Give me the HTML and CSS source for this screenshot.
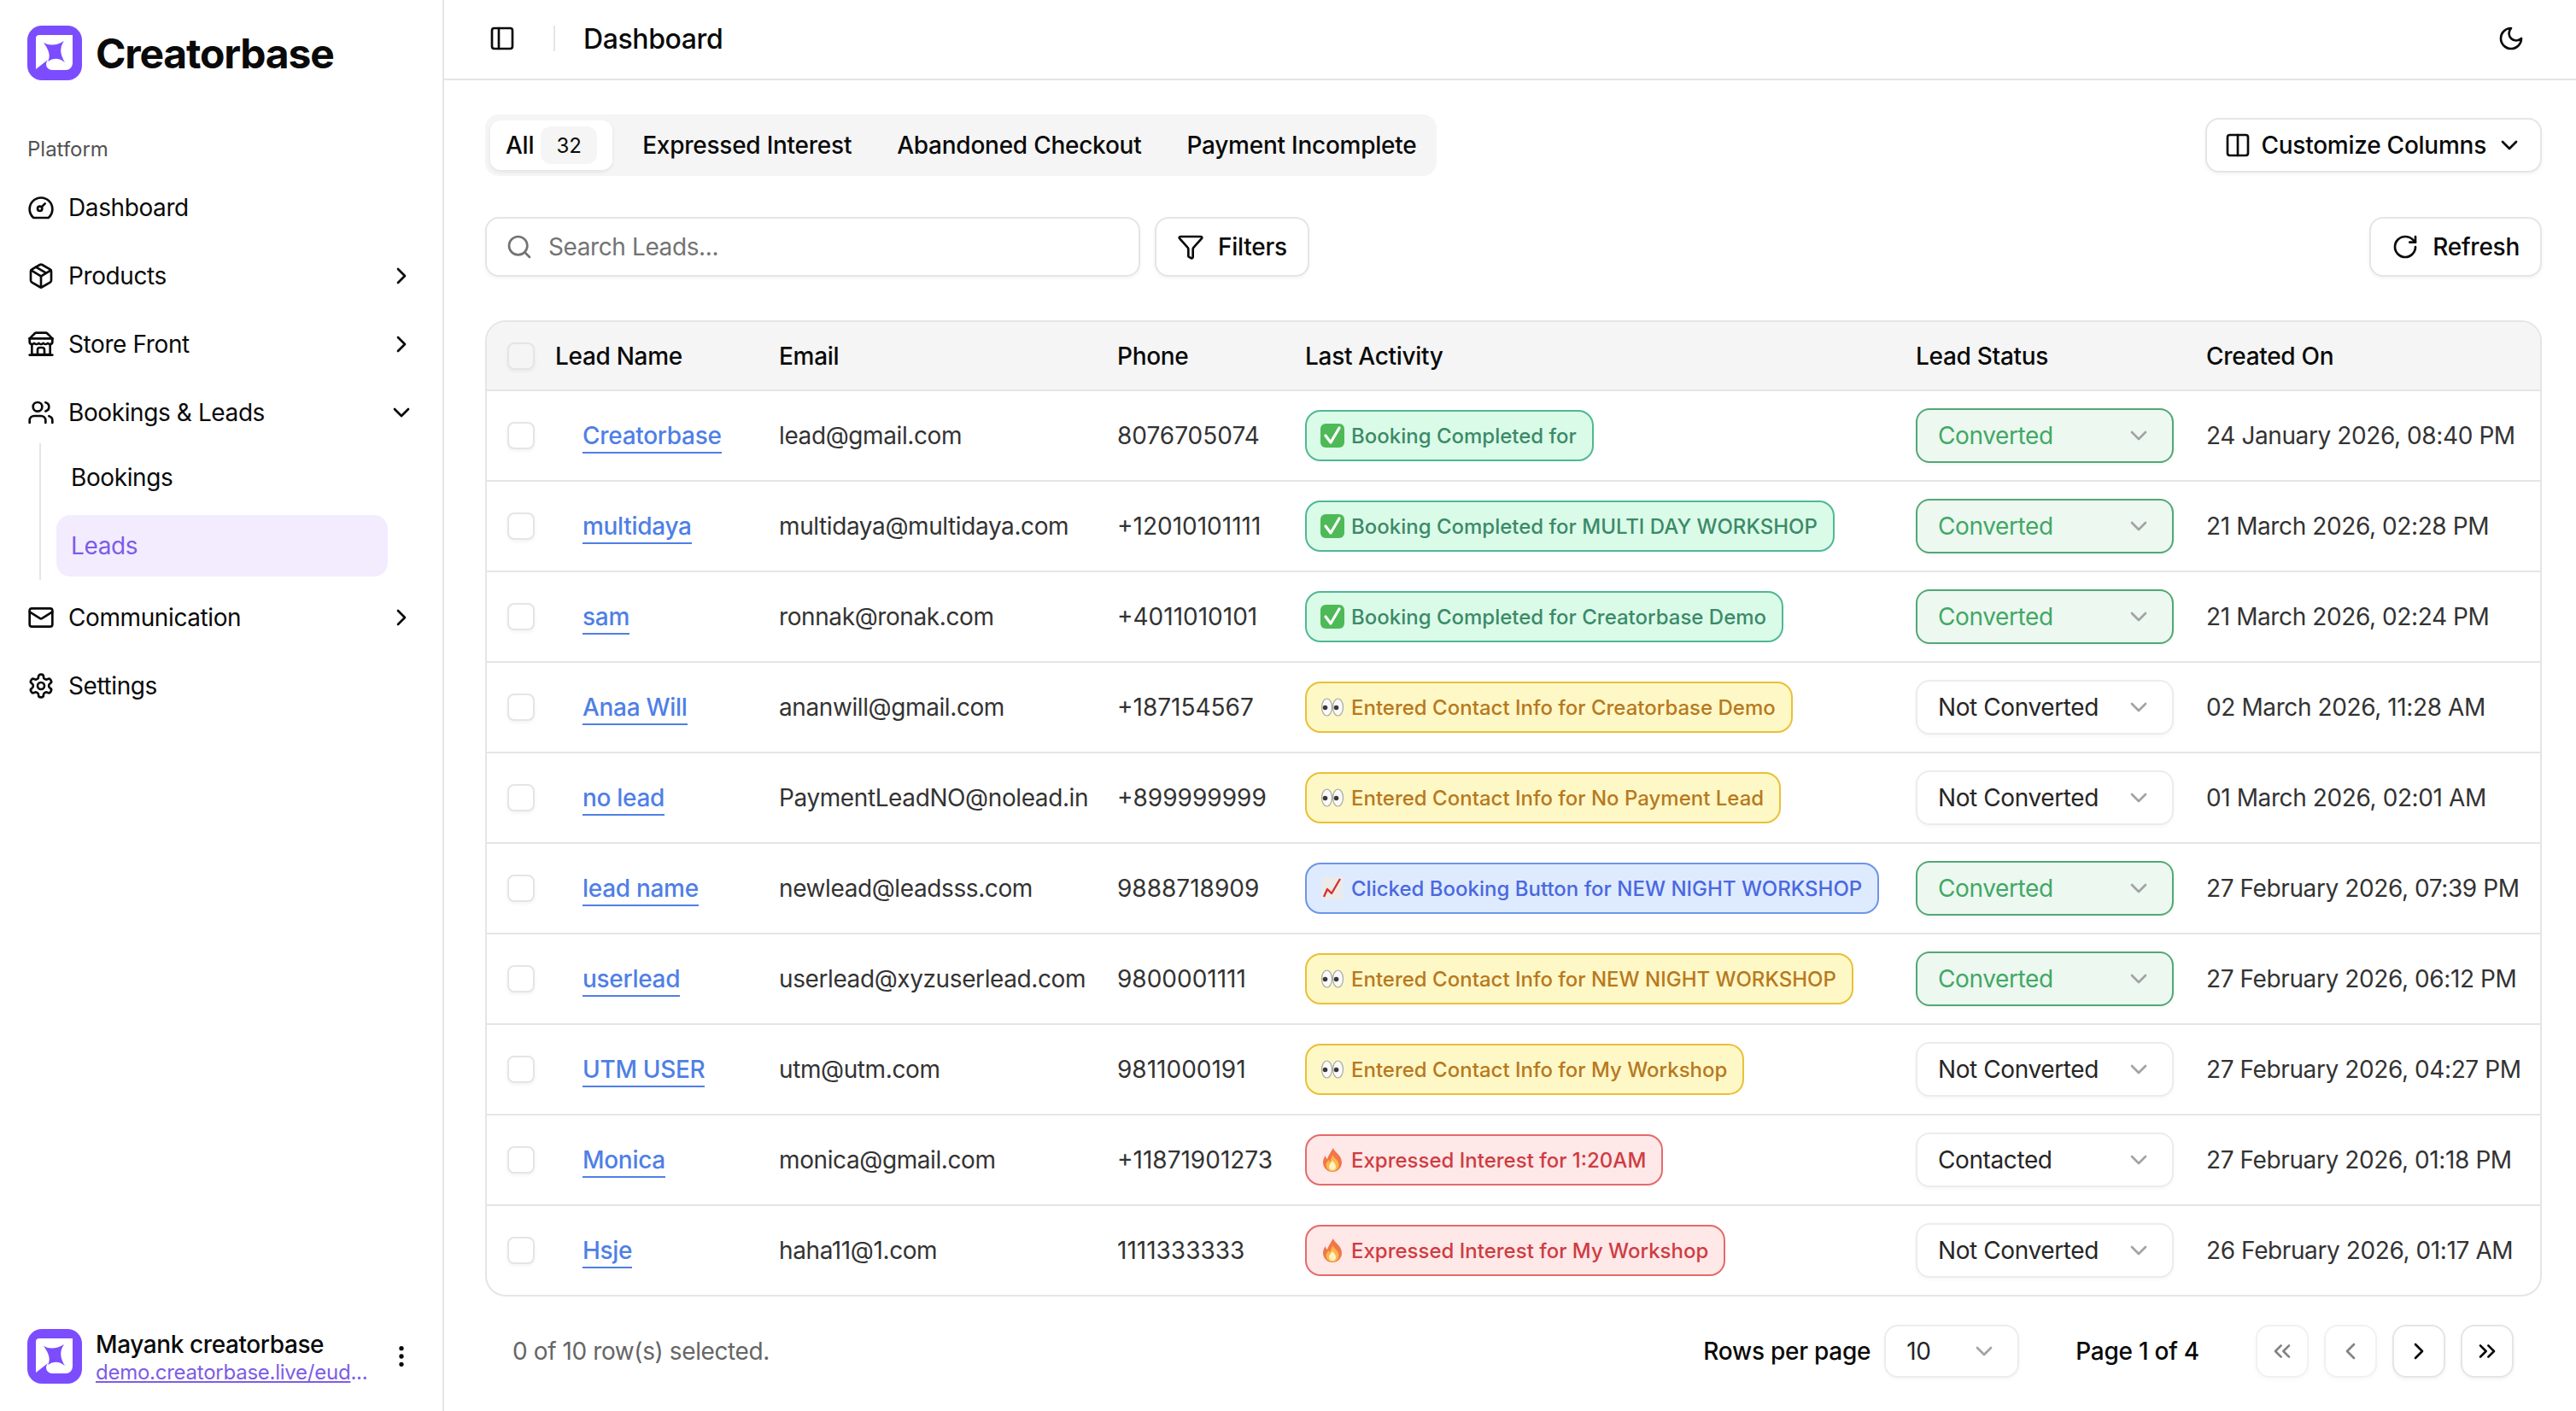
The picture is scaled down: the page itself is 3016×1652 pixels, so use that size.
FILE: index.html
```html
<!DOCTYPE html>
<html lang="en">
<head>
<meta charset="UTF-8">
<title>Leads - Creatorbase</title>
<link rel="stylesheet" href="styles.css">
</head>
<body>

<svg class="sprite" xmlns="http://www.w3.org/2000/svg">
    <symbol id="i-gauge" viewBox="0 0 24 24"><path d="M5.5 21a10 10 0 1 1 13 0z"/><circle cx="11" cy="13" r="2"/><path d="m12.5 11.5 3-3"/></symbol>
    <symbol id="i-package" viewBox="0 0 24 24"><path d="M11 21.73a2 2 0 0 0 2 0l7-4A2 2 0 0 0 21 16V8a2 2 0 0 0-1-1.73l-7-4a2 2 0 0 0-2 0l-7 4A2 2 0 0 0 3 8v8a2 2 0 0 0 1 1.73z"/><path d="M12 22V12"/><path d="m3.3 7 7.703 4.734a2 2 0 0 0 1.994 0L20.7 7"/><path d="m7.5 4.27 9 5.15"/></symbol>
    <symbol id="i-store" viewBox="0 0 24 24"><path d="m2 7 4.41-4.41A2 2 0 0 1 7.83 2h8.34a2 2 0 0 1 1.42.59L22 7"/><path d="M4 12v9h16v-9"/><path d="M15 21v-4a2 2 0 0 0-2-2h-2a2 2 0 0 0-2 2v4"/><path d="M2 7h20"/><path d="M2 21.500h20"/><path d="M22 7v3a2 2 0 0 1-2 2 2.700 2.700 0 0 1-1.590-.63.700.700 0 0 0-.82 0A2.700 2.700 0 0 1 16 12a2.700 2.700 0 0 1-1.590-.63.700.700 0 0 0-.82 0A2.700 2.700 0 0 1 12 12a2.700 2.700 0 0 1-1.590-.63.700.700 0 0 0-.82 0A2.700 2.700 0 0 1 8 12a2.700 2.700 0 0 1-1.590-.63.700.700 0 0 0-.82 0A2.700 2.700 0 0 1 4 12a2 2 0 0 1-2-2V7"/></symbol>
    <symbol id="i-users" viewBox="0 0 24 24"><path d="M16 21v-2a4 4 0 0 0-4-4H6a4 4 0 0 0-4 4v2"/><circle cx="9" cy="7" r="4"/><path d="M22 21v-2a4 4 0 0 0-3-3.870"/><path d="M16 3.130a4 4 0 0 1 0 7.750"/></symbol>
    <symbol id="i-mail" viewBox="0 0 24 24"><rect x="2" y="4" width="20" height="16" rx="2"/><path d="m22 7-8.970 5.700a1.940 1.940 0 0 1-2.060 0L2 7"/></symbol>
    <symbol id="i-settings" viewBox="0 0 24 24"><path d="M12.220 2h-.44a2 2 0 0 0-2 2v.18a2 2 0 0 1-1 1.730l-.43.25a2 2 0 0 1-2 0l-.15-.08a2 2 0 0 0-2.730.73l-.22.38a2 2 0 0 0 .73 2.730l.15.1a2 2 0 0 1 1 1.720v.51a2 2 0 0 1-1 1.740l-.15.09a2 2 0 0 0-.73 2.730l.22.38a2 2 0 0 0 2.730.73l.15-.08a2 2 0 0 1 2 0l.43.25a2 2 0 0 1 1 1.730V20a2 2 0 0 0 2 2h.44a2 2 0 0 0 2-2v-.18a2 2 0 0 1 1-1.730l.43-.25a2 2 0 0 1 2 0l.15.08a2 2 0 0 0 2.730-.73l.22-.39a2 2 0 0 0-.73-2.730l-.15-.08a2 2 0 0 1-1-1.740v-.5a2 2 0 0 1 1-1.740l.15-.09a2 2 0 0 0 .73-2.730l-.22-.38a2 2 0 0 0-2.730-.73l-.15.08a2 2 0 0 1-2 0l-.43-.25a2 2 0 0 1-1-1.730V4a2 2 0 0 0-2-2z"/><circle cx="12" cy="12" r="3"/></symbol>
    <symbol id="i-right" viewBox="0 0 24 24"><path d="m9 18 6-6-6-6"/></symbol>
    <symbol id="i-left" viewBox="0 0 24 24"><path d="m15 18-6-6 6-6"/></symbol>
    <symbol id="i-down" viewBox="0 0 24 24"><path d="m6 9 6 6 6-6"/></symbol>
    <symbol id="i-first" viewBox="0 0 24 24"><path d="m11 17-5-5 5-5"/><path d="m18 17-5-5 5-5"/></symbol>
    <symbol id="i-last" viewBox="0 0 24 24"><path d="m6 17 5-5-5-5"/><path d="m13 17 5-5-5-5"/></symbol>
    <symbol id="i-panel" viewBox="0 0 24 24"><rect x="3" y="3" width="18" height="18" rx="2"/><path d="M9 3v18"/></symbol>
    <symbol id="i-moon" viewBox="0 0 24 24"><path d="M12 3a6 6 0 0 0 9 9 9 9 0 1 1-9-9Z"/></symbol>
    <symbol id="i-columns" viewBox="0 0 24 24"><rect x="3" y="3" width="18" height="18" rx="2"/><path d="M12 3v18"/></symbol>
    <symbol id="i-search" viewBox="0 0 24 24"><circle cx="11" cy="11" r="8"/><path d="m21 21-4.300-4.300"/></symbol>
    <symbol id="i-funnel" viewBox="0 0 24 24"><path d="M10 20a1 1 0 0 0 .553.895l2 1A1 1 0 0 0 14 21v-7a2 2 0 0 1 .517-1.341L21.740 4.670A1 1 0 0 0 21 3H3a1 1 0 0 0-.742 1.670l7.225 7.989A2 2 0 0 1 10 14z"/></symbol>
    <symbol id="i-refresh" viewBox="0 0 24 24"><path d="M21 12a9 9 0 1 1-9-9c2.520 0 4.930 1 6.740 2.740L21 8"/><path d="M21 3v5h-5"/></symbol>
    <symbol id="i-dots" viewBox="0 0 24 24"><circle cx="12" cy="5" r="1"/><circle cx="12" cy="12" r="1"/><circle cx="12" cy="19" r="1"/></symbol>

    <!-- logo -->
    <symbol id="logo" viewBox="0 0 64 64">
        <rect width="64" height="64" rx="17" fill="#7c4dff"/>
        <path fill="#fff" d="M10 15a4 4 0 0 1 4-4h39v33a8 8 0 0 1-8 8H29a7 7 0 0 1-7-7q0-3 2-5L10 51z"/>
        <path fill="#7c4dff" d="M19 20Q30 26 43 18 35 29 44 43 34 35 24 42 29 33 19 20z"/>
    </symbol>

    <!-- emoji, drawn since there is no emoji font -->
    <symbol id="e-check" viewBox="0 0 28 28">
        <rect width="28" height="28" rx="6" fill="#4dba57"/>
        <path d="m6 14 6 8L22 5" fill="none" stroke="#fff" stroke-width="3.200" stroke-linecap="round" stroke-linejoin="round"/>
    </symbol>
    <symbol id="e-eyes" viewBox="0 0 28 28">
        <ellipse cx="7.500" cy="14" rx="6" ry="10" fill="#fafafa" stroke="#a8a8a0" stroke-width="1.200"/>
        <ellipse cx="20.500" cy="14" rx="6" ry="10" fill="#fafafa" stroke="#a8a8a0" stroke-width="1.200"/>
        <circle cx="5.500" cy="14.500" r="2.800" fill="#3a3a3a"/>
        <circle cx="18.500" cy="14.500" r="2.800" fill="#3a3a3a"/>
    </symbol>
    <symbol id="e-chart" viewBox="0 0 28 28">
        <rect x="2" y="1" width="24" height="26" fill="#ecebea"/>
        <path d="M4 24 8 15l5 5L23 3" fill="none" stroke="#d8322b" stroke-width="2.400" stroke-linejoin="round"/>
    </symbol>
    <symbol id="e-fire" viewBox="0 0 28 28">
        <path fill="#f0774a" d="M15 0c1 5 10 8 10 17a11 11 0 0 1-22 0c0-3 1-6 3-8 0 2 1 3 2 4 1-4 4-8 7-13z"/>
        <path fill="#fbb74a" d="M14.500 8c1 4 7 6 7 12a7.500 7.500 0 0 1-15 0c0-3 2-4 3-6 1 1 1 2 2 2 0-3 2-5 3-8z"/>
        <path fill="#fff3c4" d="M14 15c2 2 4 4 4 7a4 4 0 0 1-8 0c0-3 2-4 4-7z"/>
    </symbol>
</svg>

<div class="app">

    <aside class="sidebar">
        <div class="brand">
            <svg class="logo"><use href="#logo"/></svg>
            <span class="brand-name">Creatorbase</span>
        </div>
        <div class="nav-label">Platform</div>
        <nav>
            <div class="nav-item"><svg class="ic"><use href="#i-gauge"/></svg><span>Dashboard</span></div>
            <div class="nav-item"><svg class="ic"><use href="#i-package"/></svg><span>Products</span><svg class="ic nav-arrow"><use href="#i-right"/></svg></div>
            <div class="nav-item"><svg class="ic"><use href="#i-store"/></svg><span>Store Front</span><svg class="ic nav-arrow"><use href="#i-right"/></svg></div>
            <div class="nav-item"><svg class="ic"><use href="#i-users"/></svg><span>Bookings &amp; Leads</span><svg class="ic nav-arrow"><use href="#i-down"/></svg></div>
            <div class="sub-nav">
                <div class="sub-item">Bookings</div>
                <div class="sub-item active">Leads</div>
            </div>
            <div class="nav-item"><svg class="ic"><use href="#i-mail"/></svg><span>Communication</span><svg class="ic nav-arrow"><use href="#i-right"/></svg></div>
            <div class="nav-item"><svg class="ic"><use href="#i-settings"/></svg><span>Settings</span></div>
        </nav>
        <div class="user">
            <svg class="logo"><use href="#logo"/></svg>
            <div class="user-info">
                <div class="user-name">Mayank creatorbase</div>
                <div class="user-link"><u>demo.creatorbase.live/eud</u>...</div>
            </div>
            <svg class="ic user-menu"><use href="#i-dots"/></svg>
        </div>
    </aside>

    <main class="main">
        <header class="topbar">
            <svg class="ic"><use href="#i-panel"/></svg>
            <span class="topbar-sep"></span>
            <span class="topbar-title">Dashboard</span>
            <svg class="ic topbar-moon"><use href="#i-moon"/></svg>
        </header>

        <div class="content">
            <div class="toolbar">
                <div class="tabs">
                    <div class="tab active">All <span class="tab-count">32</span></div>
                    <div class="tab">Expressed Interest</div>
                    <div class="tab">Abandoned Checkout</div>
                    <div class="tab">Payment Incomplete</div>
                </div>
                <div class="btn btn-columns"><svg class="ic"><use href="#i-columns"/></svg>Customize Columns<svg class="ic"><use href="#i-down"/></svg></div>
            </div>

            <div class="toolbar filters">
                <div class="search"><svg class="ic"><use href="#i-search"/></svg><span>Search Leads...</span></div>
                <div class="btn btn-tall"><svg class="ic"><use href="#i-funnel"/></svg>Filters</div>
                <div class="btn btn-tall btn-refresh"><svg class="ic"><use href="#i-refresh"/></svg>Refresh</div>
            </div>

            <div class="table-wrap">
                <table class="leads">
                    <colgroup>
                        <col class="c-check"><col class="c-name"><col class="c-email"><col class="c-phone"><col class="c-activity"><col class="c-status"><col>
                    </colgroup>
                    <thead>
                        <tr>
                            <th class="check-cell"><span class="check check-head"></span></th>
                            <th>Lead Name</th>
                            <th>Email</th>
                            <th>Phone</th>
                            <th>Last Activity</th>
                            <th>Lead Status</th>
                            <th>Created On</th>
                        </tr>
                    </thead>
                    <tbody>
                        <tr>
                            <td class="check-cell"><span class="check"></span></td>
                            <td class="name-cell"><a>Creatorbase</a></td>
                            <td>lead@gmail.com</td>
                            <td>8076705074</td>
                            <td><span class="badge green"><svg class="emoji"><use href="#e-check"/></svg>Booking Completed for</span></td>
                            <td><div class="status converted">Converted<svg class="ic"><use href="#i-down"/></svg></div></td>
                            <td>24 January 2026, 08:40 PM</td>
                        </tr>
                        <tr>
                            <td class="check-cell"><span class="check"></span></td>
                            <td class="name-cell"><a>multidaya</a></td>
                            <td>multidaya@multidaya.com</td>
                            <td>+12010101111</td>
                            <td><span class="badge green"><svg class="emoji"><use href="#e-check"/></svg>Booking Completed for MULTI DAY WORKSHOP</span></td>
                            <td><div class="status converted">Converted<svg class="ic"><use href="#i-down"/></svg></div></td>
                            <td>21 March 2026, 02:28 PM</td>
                        </tr>
                        <tr>
                            <td class="check-cell"><span class="check"></span></td>
                            <td class="name-cell"><a>sam</a></td>
                            <td>ronnak@ronak.com</td>
                            <td>+4011010101</td>
                            <td><span class="badge green"><svg class="emoji"><use href="#e-check"/></svg>Booking Completed for Creatorbase Demo</span></td>
                            <td><div class="status converted">Converted<svg class="ic"><use href="#i-down"/></svg></div></td>
                            <td>21 March 2026, 02:24 PM</td>
                        </tr>
                        <tr>
                            <td class="check-cell"><span class="check"></span></td>
                            <td class="name-cell"><a>Anaa Will</a></td>
                            <td>ananwill@gmail.com</td>
                            <td>+187154567</td>
                            <td><span class="badge yellow"><svg class="emoji"><use href="#e-eyes"/></svg>Entered Contact Info for Creatorbase Demo</span></td>
                            <td><div class="status">Not Converted<svg class="ic"><use href="#i-down"/></svg></div></td>
                            <td>02 March 2026, 11:28 AM</td>
                        </tr>
                        <tr>
                            <td class="check-cell"><span class="check"></span></td>
                            <td class="name-cell"><a>no lead</a></td>
                            <td>PaymentLeadNO@nolead.in</td>
                            <td>+899999999</td>
                            <td><span class="badge yellow"><svg class="emoji"><use href="#e-eyes"/></svg>Entered Contact Info for No Payment Lead</span></td>
                            <td><div class="status">Not Converted<svg class="ic"><use href="#i-down"/></svg></div></td>
                            <td>01 March 2026, 02:01 AM</td>
                        </tr>
                        <tr>
                            <td class="check-cell"><span class="check"></span></td>
                            <td class="name-cell"><a>lead name</a></td>
                            <td>newlead@leadsss.com</td>
                            <td>9888718909</td>
                            <td><span class="badge blue"><svg class="emoji"><use href="#e-chart"/></svg>Clicked Booking Button for NEW NIGHT WORKSHOP</span></td>
                            <td><div class="status converted">Converted<svg class="ic"><use href="#i-down"/></svg></div></td>
                            <td>27 February 2026, 07:39 PM</td>
                        </tr>
                        <tr>
                            <td class="check-cell"><span class="check"></span></td>
                            <td class="name-cell"><a>userlead</a></td>
                            <td>userlead@xyzuserlead.com</td>
                            <td>9800001111</td>
                            <td><span class="badge yellow"><svg class="emoji"><use href="#e-eyes"/></svg>Entered Contact Info for NEW NIGHT WORKSHOP</span></td>
                            <td><div class="status converted">Converted<svg class="ic"><use href="#i-down"/></svg></div></td>
                            <td>27 February 2026, 06:12 PM</td>
                        </tr>
                        <tr>
                            <td class="check-cell"><span class="check"></span></td>
                            <td class="name-cell"><a>UTM USER</a></td>
                            <td>utm@utm.com</td>
                            <td>9811000191</td>
                            <td><span class="badge yellow"><svg class="emoji"><use href="#e-eyes"/></svg>Entered Contact Info for My Workshop</span></td>
                            <td><div class="status">Not Converted<svg class="ic"><use href="#i-down"/></svg></div></td>
                            <td>27 February 2026, 04:27 PM</td>
                        </tr>
                        <tr>
                            <td class="check-cell"><span class="check"></span></td>
                            <td class="name-cell"><a>Monica</a></td>
                            <td>monica@gmail.com</td>
                            <td>+11871901273</td>
                            <td><span class="badge red"><svg class="emoji"><use href="#e-fire"/></svg>Expressed Interest for 1:20AM</span></td>
                            <td><div class="status">Contacted<svg class="ic"><use href="#i-down"/></svg></div></td>
                            <td>27 February 2026, 01:18 PM</td>
                        </tr>
                        <tr>
                            <td class="check-cell"><span class="check"></span></td>
                            <td class="name-cell"><a>Hsje</a></td>
                            <td>haha11@1.com</td>
                            <td>1111333333</td>
                            <td><span class="badge red"><svg class="emoji"><use href="#e-fire"/></svg>Expressed Interest for My Workshop</span></td>
                            <td><div class="status">Not Converted<svg class="ic"><use href="#i-down"/></svg></div></td>
                            <td>26 February 2026, 01:17 AM</td>
                        </tr>
                    </tbody>
                </table>
            </div>

            <div class="pager">
                <span class="pager-selected">0 of 10 row(s) selected.</span>
                <span class="pager-label">Rows per page</span>
                <div class="status pager-size">10<svg class="ic"><use href="#i-down"/></svg></div>
                <span class="pager-label pager-page">Page 1 of 4</span>
                <div class="pager-btns">
                    <div class="page-btn disabled"><svg class="ic"><use href="#i-first"/></svg></div>
                    <div class="page-btn disabled"><svg class="ic"><use href="#i-left"/></svg></div>
                    <div class="page-btn"><svg class="ic"><use href="#i-right"/></svg></div>
                    <div class="page-btn"><svg class="ic"><use href="#i-last"/></svg></div>
                </div>
            </div>
        </div>
    </main>

</div>

</body>
</html>
```

FILE: styles.css
```css
/* page is a 2x-sized dashboard, so sizes look large */
* {
    box-sizing: border-box;
}

body {
    margin: 0;
    font-family: Inter, "Liberation Sans", sans-serif;
    font-size: 28px;
    letter-spacing: -0.4px;
    color: #0a0a0a;
    background: #fff;
}

.sprite {
    display: none;
}

.ic {
    width: 32px;
    height: 32px;
    flex-shrink: 0;
    fill: none;
    stroke: currentColor;
    stroke-width: 2;
    stroke-linecap: round;
    stroke-linejoin: round;
}

.app {
    display: flex;
    height: 1652px;
    overflow: hidden;
}

/* sidebar */
.sidebar {
    width: 520px;
    flex-shrink: 0;
    display: flex;
    flex-direction: column;
    padding: 30px 32px 30px;
    border-right: 2px solid #e5e5e5;
}

.brand {
    display: flex;
    align-items: center;
    gap: 16px;
    height: 64px;
}

.logo {
    width: 64px;
    height: 64px;
    flex-shrink: 0;
}

.brand-name {
    font-size: 48px;
    font-weight: 700;
    letter-spacing: -1.2px;
}

.nav-label {
    margin-top: 65px;
    font-size: 24px;
    line-height: 32px;
    letter-spacing: 0;
    color: #525252;
}

nav {
    margin-top: 12px;
    width: 454px;
}

.nav-item {
    display: flex;
    align-items: center;
    gap: 16px;
    height: 80px;
}

.nav-arrow {
    margin-left: auto;
}

.sub-nav {
    display: flex;
    flex-direction: column;
    gap: 8px;
    margin: -4px 32px 4px 14px;
    padding: 4px 0 4px 18px;
    border-left: 2px solid #e5e5e5;
}

.sub-item {
    height: 72px;
    line-height: 72px;
    padding-left: 17px;
    border-radius: 16px;
}

.sub-item.active {
    background: #f2ecfe;
    color: #7c5ce8;
}

.user {
    display: flex;
    align-items: center;
    gap: 16px;
    margin-top: auto;
    width: 454px;
}

.user-info {
    padding-top: 3px;
}

.user-name {
    line-height: 36px;
    font-weight: 500;
}

.user-link {
    font-size: 24px;
    line-height: 30px;
    letter-spacing: -0.25px;
    color: #7c5ce8;
    white-space: nowrap;
}

.user-menu {
    margin-left: auto;
}

.user-menu circle {
    fill: currentColor;
}

/* top bar */
.main {
    flex: 1;
    min-width: 0;
}

.topbar {
    display: flex;
    align-items: center;
    height: 94px;
    padding: 0 60px 2px 52px;
    border-bottom: 2px solid #e5e5e5;
}

.topbar-sep {
    width: 2px;
    height: 30px;
    margin: 0 33px 0 44px;
    background: #e5e5e5;
}

.topbar-title {
    font-size: 32px;
    font-weight: 500;
}

.topbar-moon {
    margin-left: auto;
}

.content {
    padding: 40px 40px 0 48px;
}

.toolbar {
    display: flex;
    align-items: center;
    justify-content: space-between;
}

/* tabs */
.tabs {
    display: flex;
    align-items: center;
    gap: 5px;
    height: 72px;
    padding: 0 0 0 6px;
    border-radius: 16px;
    background: #f5f5f5;
    font-weight: 500;
    letter-spacing: -0.25px;
}

.tab {
    display: flex;
    align-items: center;
    height: 58px;
    padding: 0 24px;
    border-radius: 12px;
}

.tab.active {
    gap: 8px;
    margin-right: 6px;
    padding: 0 18px;
    background: #fff;
    box-shadow: 0 2px 4px rgba(0, 0, 0, 0.08);
}

.tab-count {
    display: flex;
    align-items: center;
    justify-content: center;
    width: 66px;
    height: 44px;
    border-radius: 12px;
    background: #f5f5f5;
    font-size: 24px;
    font-weight: 400;
    letter-spacing: 0;
}

/* buttons */
.btn {
    display: flex;
    align-items: center;
    gap: 14px;
    height: 64px;
    padding: 0 22px;
    border: 2px solid #e5e5e5;
    border-radius: 16px;
    background: #fff;
    font-weight: 500;
    letter-spacing: -0.25px;
    box-shadow: 0 2px 4px rgba(0, 0, 0, 0.05);
}

.btn-columns {
    gap: 11px;
    padding: 0 20px;
}

.btn-tall {
    height: 70px;
    gap: 16px;
    padding: 0 24px;
}

.btn-refresh {
    margin-left: auto;
}

.filters {
    margin-top: 48px;
    justify-content: flex-start;
    gap: 17px;
}

.search {
    display: flex;
    align-items: center;
    gap: 18px;
    width: 767px;
    height: 70px;
    padding: 0 22px;
    border: 2px solid #e5e5e5;
    border-radius: 16px;
    color: #737373;
    box-shadow: 0 2px 4px rgba(0, 0, 0, 0.05);
}

/* table */
.table-wrap {
    margin-top: 51px;
    border: 2px solid #e5e5e5;
    border-radius: 24px;
    overflow: hidden;
}

.leads {
    width: 100%;
    table-layout: fixed;
    border-collapse: separate;
    border-spacing: 0;
}

.c-check { width: 64px; }
.c-name { width: 262px; }
.c-email { width: 396px; }
.c-phone { width: 220px; }
.c-activity { width: 715px; }
.c-status { width: 340px; }

.leads th,
.leads td {
    padding: 0 0 0 16px;
    text-align: left;
    white-space: nowrap;
    border-bottom: 2px solid #e5e5e5;
}

.leads th {
    height: 81px;
    background: #f5f5f5;
    font-weight: 500;
    letter-spacing: -0.3px;
}

.leads td {
    height: 106px;
    color: #333;
}

/* phone numbers run a bit wider than the rest */
.leads td:nth-child(4) {
    letter-spacing: 0;
}

.leads tr:last-child td {
    height: 104px;
    border-bottom: none;
}

.leads .check-cell {
    padding-left: 24px;
}

.check {
    display: block;
    width: 32px;
    height: 32px;
    border: 2px solid #e5e5e5;
    border-radius: 8px;
    background: #fff;
    box-shadow: 0 2px 4px rgba(0, 0, 0, 0.05);
}

.check-head {
    background: #f5f5f5;
}

.name-cell a {
    margin-left: 32px;
    padding-bottom: 2px;
    border-bottom: 2px solid #4f7fe6;
    color: #4f7fe6;
    font-weight: 500;
    letter-spacing: -0.3px;
}

/* activity badges */
.badge {
    display: inline-flex;
    align-items: center;
    gap: 8px;
    height: 60px;
    padding: 0 18px 0 16px;
    border: 2px solid;
    border-radius: 18px;
    font-size: 24px;
    font-weight: 500;
    letter-spacing: 0;
    vertical-align: middle;
}

.emoji {
    width: 28px;
    height: 28px;
    flex-shrink: 0;
}

.green {
    background: #dbfbe9;
    border-color: #4fb893;
    color: #3b8a68;
}

.yellow {
    background: #fef8c6;
    border-color: #e9c038;
    color: #b7791f;
}

.blue {
    background: #deebff;
    border-color: #6d95e8;
    color: #4a68e0;
}

.red {
    background: #fee8e8;
    border-color: #e66a6a;
    color: #cf3c42;
}

/* status select */
.status {
    display: flex;
    align-items: center;
    justify-content: space-between;
    width: 302px;
    height: 64px;
    padding: 0 23px 0 24px;
    border: 2px solid #ececec;
    border-radius: 16px;
    background: #fff;
    color: #262626;
    box-shadow: 0 2px 4px rgba(0, 0, 0, 0.04);
}

.status .ic {
    color: #a3a3a3;
}

.status.converted {
    background: #edf8f0;
    border-color: #52a874;
    color: #41a866;
}

/* pager */
.pager {
    display: flex;
    align-items: center;
    height: 62px;
    margin-top: 33px;
    padding: 0 33px 0 32px;
}

.pager-selected {
    margin-right: auto;
    color: #666;
}

.pager-label {
    font-weight: 500;
    letter-spacing: -0.25px;
}

.pager-size {
    width: 158px;
    height: 62px;
    margin-left: 16px;
}

.pager-page {
    margin-left: 66px;
}

.pager-btns {
    display: flex;
    gap: 18px;
    margin-left: 66px;
}

.page-btn {
    display: flex;
    align-items: center;
    justify-content: center;
    width: 62px;
    height: 62px;
    border: 2px solid #e5e5e5;
    border-radius: 16px;
    box-shadow: 0 2px 4px rgba(0, 0, 0, 0.05);
}

.page-btn.disabled {
    opacity: 0.5;
}
```
